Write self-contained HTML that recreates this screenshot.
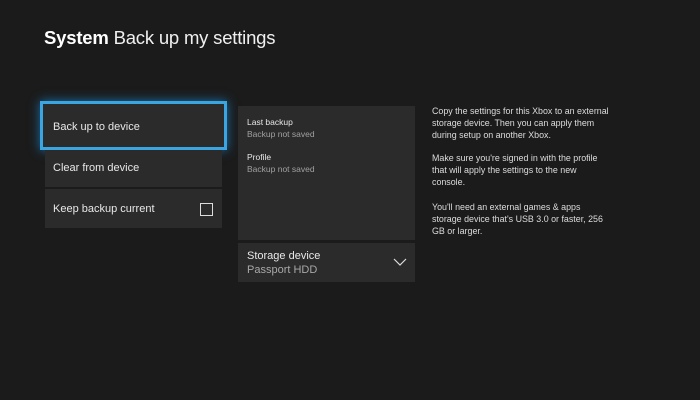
<!DOCTYPE html>
<html><head><style>
body{margin:0;width:700px;height:400px;background:#1b1b1b;font-family:"Liberation Sans",sans-serif;color:#fff;position:relative;overflow:hidden}
.a{position:absolute}
.t{background:#2b2b2b}
.l{font-size:11px;color:#e8e8e8}
.s{font-size:8.5px;color:#a0a0a0}
.p{font-size:8.9px;color:#dcdcdc;line-height:11.8px;width:178px}
</style></head><body>
<div class="a" style="left:44px;top:27px;font-size:18.5px;letter-spacing:-0.2px"><b>System</b> <span style="color:#f0f0f0">Back up my settings</span></div>
<div class="a t" style="left:40px;top:101px;width:181px;height:43px;border:3px solid #3aa5e0;box-shadow:0 0 10px #1d6fa8"></div>
<div class="a l" style="left:53px;top:121px">Back up to device</div>
<div class="a t" style="left:45px;top:150px;width:177px;height:37px"></div>
<div class="a l" style="left:53px;top:162px">Clear from device</div>
<div class="a t" style="left:45px;top:189px;width:177px;height:39px"></div>
<div class="a l" style="left:53px;top:203px">Keep backup current</div>
<div class="a" style="left:200px;top:203px;width:11px;height:11px;border:1px solid #ddd"></div>
<div class="a t" style="left:238px;top:106px;width:177px;height:134px"></div>
<div class="a" style="left:247px;top:117px;font-size:8.5px;color:#e8e8e8">Last backup</div>
<div class="a s" style="left:247px;top:129px">Backup not saved</div>
<div class="a" style="left:247px;top:152px;font-size:8.5px;color:#e8e8e8">Profile</div>
<div class="a s" style="left:247px;top:164px">Backup not saved</div>
<div class="a t" style="left:238px;top:243px;width:177px;height:39px"></div>
<div class="a l" style="left:247px;top:250px">Storage device</div>
<div class="a" style="left:247px;top:264px;font-size:11px;color:#a8a8a8">Passport HDD</div>
<svg class="a" style="left:393px;top:258px" width="14" height="9"><path d="M1 1L7 7L13 1" stroke="#ddd" stroke-width="1.2" fill="none"/></svg>
<div class="a p" style="left:432px;top:106px">Copy the settings for this Xbox to an external storage device. Then you can apply them during setup on another Xbox.</div>
<div class="a p" style="left:432px;top:153px">Make sure you're signed in with the profile that will apply the settings to the new console.</div>
<div class="a p" style="left:432px;top:202px">You'll need an external games &amp; apps storage device that's USB 3.0 or faster, 256 GB or larger.</div>
</body></html>
